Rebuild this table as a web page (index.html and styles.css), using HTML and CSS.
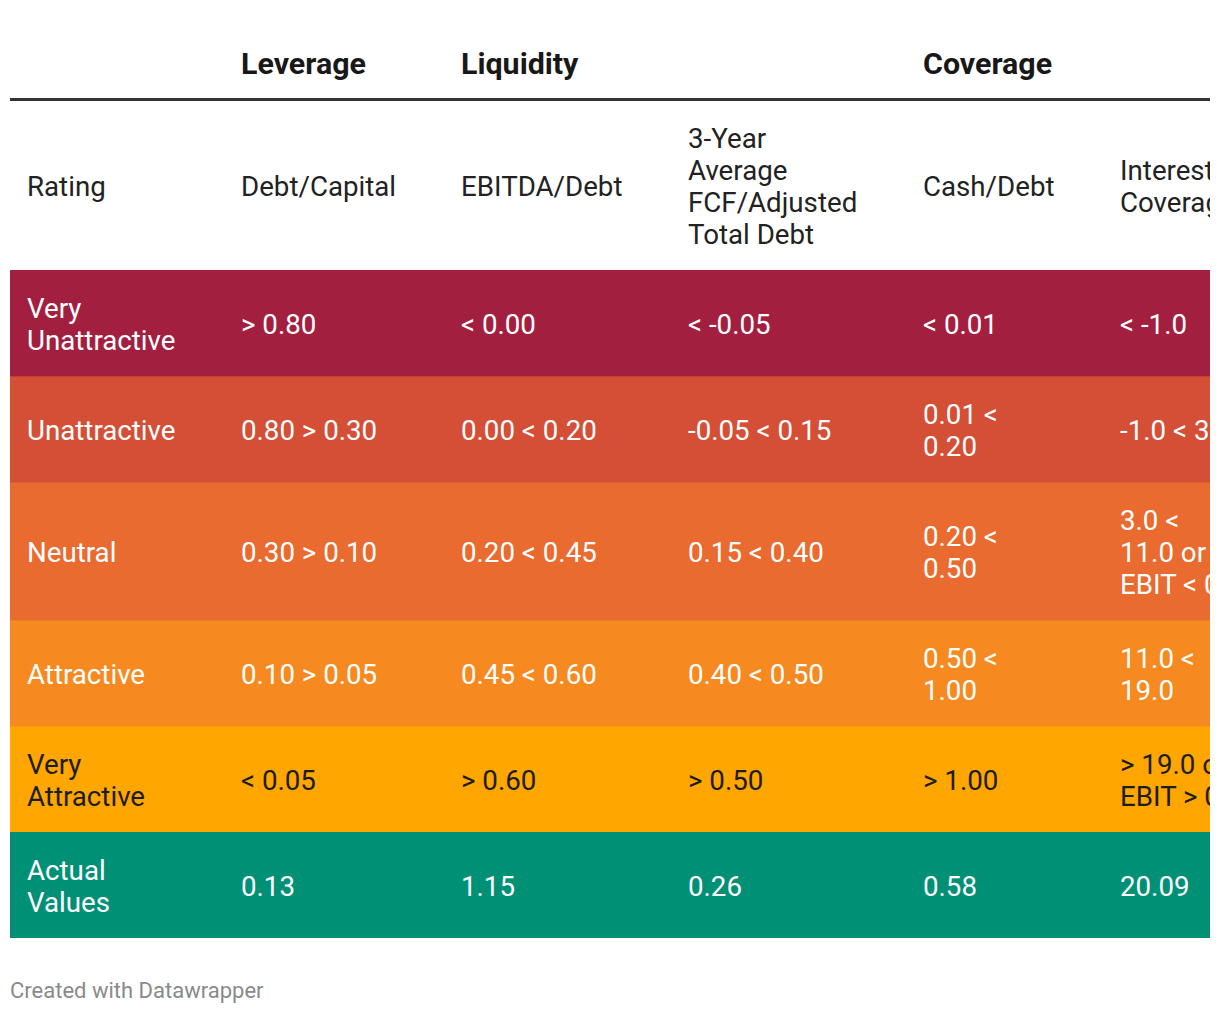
FILE: index.html
```html
<!DOCTYPE html>
<html>
<head>
<meta charset="utf-8">
<link rel="stylesheet" href="styles.css">
</head>
<body>
<div class="chart">
  <div class="clip">
    <table class="tbl">
      <colgroup>
        <col class="c1"><col class="c2"><col class="c3"><col class="c4"><col class="c5"><col class="c6"><col class="c7">
      </colgroup>
      <thead>
        <tr class="groups">
          <th></th>
          <th>Leverage</th>
          <th colspan="2">Liquidity</th>
          <th colspan="3">Coverage</th>
        </tr>
        <tr class="heads">
          <th>Rating</th>
          <th>Debt/Capital</th>
          <th>EBITDA/Debt</th>
          <th>3-Year<br>Average<br>FCF/Adjusted<br>Total Debt</th>
          <th>Cash/Debt</th>
          <th>Interest<br>Coverage</th>
          <th>EBITDA<br>Margin</th>
        </tr>
      </thead>
      <tbody>
        <tr class="r1">
          <td>Very<br>Unattractive</td><td>&gt; 0.80</td><td>&lt; 0.00</td><td>&lt; -0.05</td><td>&lt; 0.01</td><td>&lt; -1.0</td><td>&lt; 0.0</td>
        </tr>
        <tr class="r2">
          <td>Unattractive</td><td>0.80 &gt; 0.30</td><td>0.00 &lt; 0.20</td><td>-0.05 &lt; 0.15</td><td>0.01 &lt;<br>0.20</td><td>-1.0 &lt; 3.0</td><td>0.0 &lt; 0.1</td>
        </tr>
        <tr class="r3">
          <td>Neutral</td><td>0.30 &gt; 0.10</td><td>0.20 &lt; 0.45</td><td>0.15 &lt; 0.40</td><td>0.20 &lt;<br>0.50</td><td>3.0 &lt;<br>11.0 or<br>EBIT &lt; 0</td><td>0.1 &lt; 0.2</td>
        </tr>
        <tr class="r4">
          <td>Attractive</td><td>0.10 &gt; 0.05</td><td>0.45 &lt; 0.60</td><td>0.40 &lt; 0.50</td><td>0.50 &lt;<br>1.00</td><td>11.0 &lt;<br>19.0</td><td>0.2 &lt; 0.3</td>
        </tr>
        <tr class="r5">
          <td>Very<br>Attractive</td><td>&lt; 0.05</td><td>&gt; 0.60</td><td>&gt; 0.50</td><td>&gt; 1.00</td><td>&gt; 19.0 or<br>EBIT &gt; 0</td><td>&gt; 0.3</td>
        </tr>
        <tr class="r6">
          <td>Actual<br>Values</td><td>0.13</td><td>1.15</td><td>0.26</td><td>0.58</td><td>20.09</td><td>0.25</td>
        </tr>
      </tbody>
    </table>
  </div>
  <div class="footer">Created with Datawrapper</div>
</div>
</body>
</html>
```

FILE: styles.css
```css
html, body {
  margin: 0;
  padding: 0;
  background: #ffffff;
}
body {
  font-family: Roboto, "Liberation Sans", sans-serif;
  color: #222222;
}
.chart {
  padding: 24px 10px 0 10px;
}
.clip {
  overflow: hidden;
  width: 1200px;
}
.tbl {
  border-collapse: collapse;
  table-layout: fixed;
  width: 1500px;
}
.c1 { width: 214px; }
.c2 { width: 220px; }
.c3 { width: 227px; }
.c4 { width: 235px; }
.c5 { width: 197px; }
.c6 { width: 200px; }
.c7 { width: 207px; }
.tbl th, .tbl td {
  text-align: left;
  vertical-align: middle;
  padding: 21px 17px;
  font-size: 27.7px;
  line-height: 32px;
  white-space: nowrap;
  overflow: hidden;
}
.tbl .groups th {
  font-weight: 700;
  font-size: 30.4px;
  color: #181818;
  border-bottom: 3px solid #333333;
  padding-top: 24px;
  padding-bottom: 18px;
}
.tbl .heads th {
  font-weight: 400;
  color: #222222;
  padding-top: 22px;
  padding-bottom: 19px;
}
.tbl tbody td {
  color: #ffffff;
  padding-top: 23px;
  padding-bottom: 19px;
  background-repeat: no-repeat;
  background-size: 100% 1px;
  background-position: top left;
}
.r1 { background: #a31f3f; }
.r2 { background: #d54e36; }
.tbl .r2 td { background-image: linear-gradient(#c4423a, #c4423a); }
.r3 { background: #e96b2f; }
.tbl .r3 td { background-image: linear-gradient(#de5e32, #de5e32); }
.r4 { background: #f68a20; }
.tbl .r4 td { background-image: linear-gradient(#ef7b27, #ef7b27); }
.r5 { background: #ffa600; }
.tbl .r5 td { color: #1d1d1d; background-image: linear-gradient(#fb9812, #fb9812); }
.r6 { background: #009076; }
.footer {
  margin-top: 41px;
  font-size: 22px;
  line-height: 24px;
  color: #8a8a8a;
}
```
